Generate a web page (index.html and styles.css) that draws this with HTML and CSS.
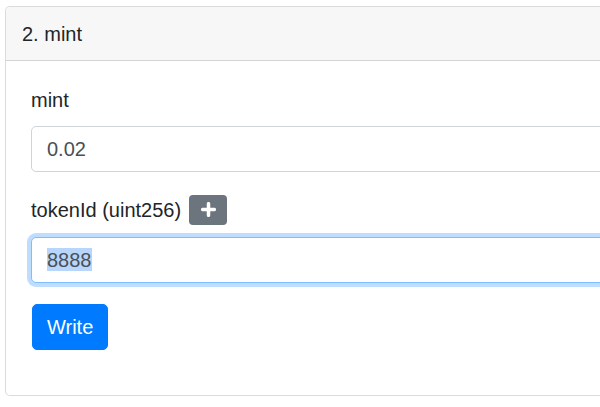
FILE: index.html
```html
<!DOCTYPE html>
<html>
<head>
<meta charset="utf-8">
<link rel="stylesheet" href="styles.css">
</head>
<body>
<div class="card">
  <div class="card-header">2. mint</div>
  <div class="card-body">
    <div class="form-group">
      <label class="field-label">mint</label>
      <input class="form-control" type="text" value="0.02">
    </div>
    <div class="form-group">
      <label class="field-label with-btn">tokenId (uint256)
        <button class="btn-add" type="button" aria-label="add">
          <svg width="15" height="15" viewBox="0 0 15 15"><path d="M7.5 1.7v11.6M1.7 7.5h11.6" stroke="#fff" stroke-width="3.5" stroke-linecap="round"/></svg>
        </button>
      </label>
      <input class="form-control focused selected" type="text" value="8888">
    </div>
    <button class="btn-primary" type="button">Write</button>
  </div>
</div>
</body>
</html>
```

FILE: styles.css
```css
html, body {
  margin: 0;
  padding: 0;
  overflow: hidden;
  background: #fff;
}
body {
  font-family: "Liberation Sans", Arial, Helvetica, sans-serif;
  font-size: 20px;
  line-height: 1.5;
  color: #212529;
}
.card {
  margin: 6px 0 0 5px;
  width: 660px;
  border: 1px solid rgba(0, 0, 0, 0.14);
  border-radius: 5px;
  background: #fff;
}
.card-header {
  padding: 11.5px 16px;
  background: #f7f7f7;
  border-bottom: 1px solid rgba(0, 0, 0, 0.14);
  border-radius: 5px 5px 0 0;
}
.card-body {
  padding: 24px 24px 45px 25px;
}
.form-group {
  margin-bottom: 21px;
}
.field-label {
  display: block;
  margin-bottom: 11px;
  height: 30px;
}
.field-label.with-btn {
  display: flex;
  align-items: center;
  gap: 8px;
  height: 33px;
}
.btn-add {
  width: 38px;
  height: 30px;
  padding: 0;
  border: none;
  border-radius: 4px;
  background: #6c757d;
  display: flex;
  align-items: center;
  justify-content: center;
}
.form-control {
  display: block;
  box-sizing: border-box;
  width: 100%;
  height: 46px;
  padding: 7px 15px;
  font-family: inherit;
  font-size: 20px;
  line-height: 1.5;
  color: #495057;
  background: #fff;
  border: 1px solid #ced4da;
  border-radius: 5px;
  outline: none;
}
.form-control.focused {
  border-color: #80bdff;
  box-shadow: 0 0 0 4px rgba(0, 123, 255, 0.25);
}
.form-control.selected {
  background-image: linear-gradient(#b8d6fb, #b8d6fb);
  background-repeat: no-repeat;
  background-origin: padding-box;
  background-position: 15px 10px;
  background-size: 45px 23px;
}
.btn-primary {
  display: inline-block;
  margin-left: 1px;
  height: 46px;
  padding: 7px 14px;
  font-family: inherit;
  font-size: 20px;
  line-height: 1.5;
  color: #fff;
  background: #007bff;
  border: 1px solid #007bff;
  border-radius: 5px;
}
```
